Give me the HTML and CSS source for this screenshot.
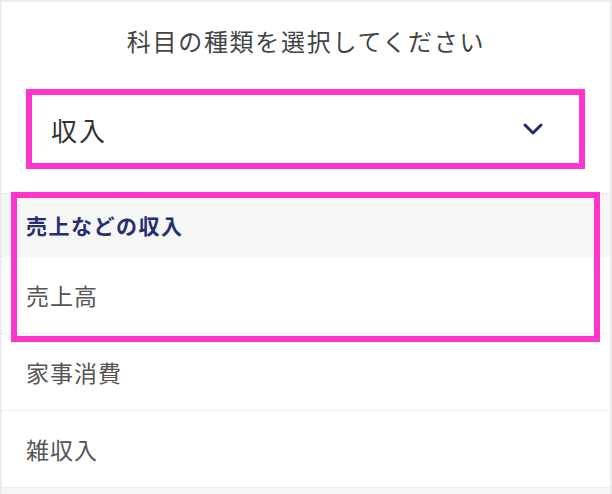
FILE: index.html
```html
<!DOCTYPE html>
<html lang="ja">
<head>
    <meta charset="UTF-8">
    <meta name="viewport" content="width=device-width, initial-scale=1.0">
    <title>科目の種類</title>
    <link rel="stylesheet" href="styles.css">
</head>
<body>
    <div class="sheet">
        <h1 class="title">科目の種類を選択してください</h1>

        <!-- Selected type -->
        <div class="select">
            <span class="select-value">収入</span>
            <svg class="chevron" width="22" height="14" viewBox="0 0 22 14">
                <polyline points="3,3 11,11 19,3" fill="none" stroke="#1f2a6c" stroke-width="3" stroke-linecap="round" stroke-linejoin="round"/>
            </svg>
        </div>

        <!-- Account list -->
        <div class="list">
            <div class="group-head">売上などの収入</div>
            <div class="item">売上高</div>
            <div class="item">家事消費</div>
            <div class="item">雑収入</div>
            <div class="group-head next"></div>
        </div>

        <div class="highlight"></div>
    </div>
</body>
</html>
```

FILE: styles.css
```css
body {
    margin: 0;
    padding: 0;
    background-color: #fff;
    font-family: "Noto Sans CJK JP", "Noto Sans", sans-serif;
}

.sheet {
    position: relative;
    height: 492px;
    overflow: hidden;
    border: 2px solid #ececec;
    border-bottom: none;
}

.title {
    margin: 0;
    padding-top: 23px;
    height: 64px;
    box-sizing: border-box;
    text-align: center;
    font-size: 24px;
    font-weight: normal;
    line-height: 32px;
    letter-spacing: 1.7px;
    color: #444;
}

.select {
    display: flex;
    align-items: center;
    justify-content: space-between;
    height: 80px;
    margin: 23px 25px 0 24px;
    padding: 0 35px 0 19px;
    box-sizing: border-box;
    border: 6px solid #ff34cc;
    background-color: #fff;
}

.select-value {
    font-size: 26px;
    letter-spacing: 2px;
    color: #333;
}

.list {
    margin-top: 24px;
    border-top: 1px solid #ececec;
}

.group-head {
    height: 63px;
    padding-left: 24px;
    background-color: #f6f6f4;
    font-size: 21px;
    font-weight: bold;
    line-height: 63px;
    letter-spacing: 1.5px;
    color: #252e70;
}

.item {
    height: 76px;
    padding-left: 24px;
    border-bottom: 1px solid #ececec;
    font-size: 23px;
    line-height: 76px;
    letter-spacing: 1px;
    color: #555;
}

.highlight {
    position: absolute;
    top: 190px;
    left: 9px;
    width: 589px;
    height: 150px;
    box-sizing: border-box;
    border: 6px solid #ff34cc;
}
```
